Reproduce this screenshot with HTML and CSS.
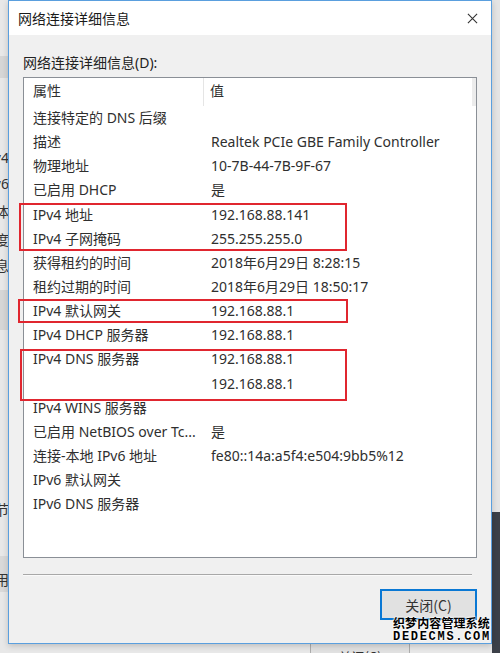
FILE: index.html
```html
<!DOCTYPE html>
<html lang="zh-CN">
<head>
  <meta charset="UTF-8">
  <title>网络连接详细信息</title>
  <link rel="stylesheet" href="styles.css">
</head>
<body>
 <div class="desk">
   <!-- window behind the dialog, only its edges show -->
   <div class="behind">
     <div class="band b1"></div>
     <div class="band b2"></div>
     <div class="band b3"></div>
     <div class="peek p1">IPv4</div>
     <div class="peek p2">IPv6</div>
     <div class="peek p3">媒体</div>
     <div class="peek p4">速度</div>
     <div class="peek p5">详细信息</div>
     <div class="peek p6">已发送字节</div>
     <div class="peek p7">禁用</div>
     <div class="back-btn">关闭(C)</div>
   </div>
   <div class="side"></div>

   <!-- Dialog -->
   <div class="dialog">
     <div class="titlebar">
       <span class="title">网络连接详细信息</span>
       <svg class="close" viewBox="0 0 12 12"><path d="M1 1 11 11M11 1 1 11" stroke="#333" stroke-width="1.2" fill="none"/></svg>
     </div>
     <div class="content">
       <div class="label">网络连接详细信息(D):</div>
       <div class="list">
         <div class="scroll"></div>
         <div class="row head"><span class="k">属性</span><span class="v">值</span></div>
         <div class="row"><span class="k">连接特定的 DNS 后缀</span><span class="v"></span></div>
         <div class="row"><span class="k">描述</span><span class="v">Realtek PCIe GBE Family Controller</span></div>
         <div class="row"><span class="k">物理地址</span><span class="v">10-7B-44-7B-9F-67</span></div>
         <div class="row"><span class="k">已启用 DHCP</span><span class="v">是</span></div>
         <div class="row"><span class="k">IPv4 地址</span><span class="v">192.168.88.141</span></div>
         <div class="row"><span class="k">IPv4 子网掩码</span><span class="v">255.255.255.0</span></div>
         <div class="row"><span class="k">获得租约的时间</span><span class="v">2018年6月29日 8:28:15</span></div>
         <div class="row"><span class="k">租约过期的时间</span><span class="v">2018年6月29日 18:50:17</span></div>
         <div class="row"><span class="k">IPv4 默认网关</span><span class="v">192.168.88.1</span></div>
         <div class="row"><span class="k">IPv4 DHCP 服务器</span><span class="v">192.168.88.1</span></div>
         <div class="row"><span class="k">IPv4 DNS 服务器</span><span class="v">192.168.88.1</span></div>
         <div class="row"><span class="k"></span><span class="v">192.168.88.1</span></div>
         <div class="row"><span class="k">IPv4 WINS 服务器</span><span class="v"></span></div>
         <div class="row"><span class="k">已启用 NetBIOS over Tc...</span><span class="v">是</span></div>
         <div class="row"><span class="k">连接-本地 IPv6 地址</span><span class="v">fe80::14a:a5f4:e504:9bb5%12</span></div>
         <div class="row"><span class="k">IPv6 默认网关</span><span class="v"></span></div>
         <div class="row"><span class="k">IPv6 DNS 服务器</span><span class="v"></span></div>
       </div>
       <div class="sep"></div>
       <button class="btn">关闭(C)</button>
     </div>
     <!-- red annotation boxes -->
     <div class="mark m1"></div>
     <div class="mark m2"></div>
     <div class="mark m3"></div>
   </div>

   <div class="wm">
     <div class="wm-cn">织梦内容管理系统</div>
     <div class="wm-en">DEDECMS.COM</div>
   </div>
 </div>
</body>
</html>
```

FILE: styles.css
```css
*{box-sizing:border-box;margin:0;padding:0}
body{font-family:"Noto Sans","Noto Sans CJK SC",sans-serif;background:#e6e6e6;color:#2f2f2f}
.desk{position:relative;width:500px;height:653px;overflow:hidden;background:#e8e8e8}

/* background window edges */
.behind{position:absolute;inset:0}
.band{position:absolute;left:0;width:8px;background:#d6d6d6}
.b1{top:56px;height:22px}
.b2{top:290px;height:40px}
.b3{top:556px;height:36px;background:#d9d9d9}
.peek{position:absolute;right:491px;font-size:14px;line-height:20px;white-space:nowrap;color:#333}
.p1{top:148px}.p2{top:174px}.p3{top:202px}.p4{top:230px}.p5{top:256px}.p6{top:500px}.p7{top:570px}
.back-btn{position:absolute;left:310px;top:643px;width:100px;height:30px;border:1px solid #adadad;background:#e1e1e1;font-size:13px;text-align:center;padding-top:3px;font-family:"Noto Sans CJK SC",sans-serif}
.side{position:absolute;left:492px;top:0;width:8px;height:653px;background:linear-gradient(#e4e4e4 0,#e4e4e4 512px,#3b4048 512px)}

/* dialog */
.dialog{position:absolute;left:8px;top:0;width:484px;height:644px;border:1px solid #5a9fde;background:#f0f0f0;display:flex;flex-direction:column;box-shadow:0 2px 6px rgba(0,0,0,.18)}
.titlebar{height:34px;background:#fff;display:flex;align-items:center;justify-content:space-between;padding:0 13px 0 9px}
.title{font-size:14px;color:#1a1a1a;font-family:"Noto Sans CJK SC",sans-serif}
.close{width:11px;height:11px}
.content{flex:1;display:flex;flex-direction:column;padding:18px 14px 0 14px}
.label{font-size:14px;line-height:20px;margin-bottom:4px;color:#222}
.list{position:relative;height:481px;border:1px solid #8a8f96;background:#fff;padding-top:0}
.scroll{position:absolute;right:0;top:0;width:4px;height:28px;background:#ececec}
.row{display:flex;height:24.15px;line-height:24px;font-size:14px;white-space:nowrap}
.row .k{width:180px;padding-left:9px;overflow:hidden}
.row .v{padding-left:7px}
.row.head{height:28px;line-height:26px}
.row.head .k{border-right:1px solid #e5e5e5}
.row.head .v{padding-left:6px}
.sep{margin-top:16px;height:1px;background:#a8a8a8;margin-right:5px;box-shadow:0 1px 0 #fafafa}
.btn{align-self:flex-end;margin-top:14px;width:97px;height:31px;border:2px solid #0a78d4;background:#e1e1e1;font-family:"Noto Sans CJK SC",sans-serif;font-size:14px;color:#333}

.mark{position:absolute;border:2px solid #e0262f}
.m1{left:10px;top:202px;width:328px;height:48px}
.m2{left:9px;top:298px;width:330px;height:24px}
.m3{left:11px;top:348px;width:327px;height:52px}

/* watermark overlay */
.wm{position:absolute;left:393px;top:615px;width:100px;font-weight:700;color:#000;text-shadow:0 0 2px #fff,0 0 2px #fff,0 0 2px #fff}
.wm-cn{font-family:"Noto Sans CJK SC",sans-serif;font-size:12px;line-height:15px;letter-spacing:.1px}
.wm-en{font-family:"Liberation Mono",monospace;font-size:12px;line-height:14px;letter-spacing:1.7px}
```
